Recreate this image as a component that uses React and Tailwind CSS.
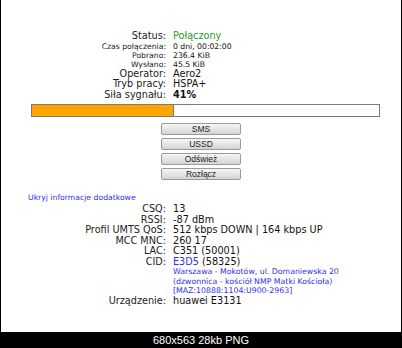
import React from 'react';

const Row = ({ label, children, small }) => (
  <div className={small ? 'flex text-[7.7px] leading-[9px]' : 'flex text-[9.7px] leading-[10.5px]'}>
    <div className="w-[165px] shrink-0 text-right text-[#222]">{label}</div>
    <div className="pl-[7px] text-[#111] whitespace-nowrap">{children}</div>
  </div>
);

const Btn = ({ children }) => (
  <button className="mx-auto block w-[80px] h-[12px] rounded-[2px] border border-[#9a9a9a] bg-gradient-to-b from-[#f6f6f6] to-[#d4d4d4] text-[8.5px] leading-[10px] text-[#222] font-['Liberation_Sans',Arial,sans-serif]">
    {children}
  </button>
);

const App = () => {
  const signal = 41;

  return (
    <div className="w-[402px] h-[348px] bg-black flex flex-col font-['DejaVu_Sans',Verdana,sans-serif]">
      <div className="ml-[1px] mr-[1px] h-[332px] bg-white pt-[31px]">
        <Row label="Status:"><span className="text-[#22a022]">Połączony</span></Row>
        <Row small label="Czas połączenia:">0 dni, 00:02:00</Row>
        <Row small label="Pobrano:">236.4 KiB</Row>
        <Row small label="Wysłano:">45.5 KiB</Row>
        <Row label="Operator:">Aero2</Row>
        <Row label="Tryb pracy:">HSPA+</Row>
        <Row label="Siła sygnału:"><span className="font-bold">{signal}%</span></Row>

        <div className="ml-[30px] mt-[4px] w-[349px] h-[13px] border border-[#7a7a7a] bg-white">
          <div className="h-full bg-[#ffa500] border-r border-[#7a7a7a]" style={{ width: `${signal}%` }} />
        </div>

        <div className="mt-[6px] flex flex-col gap-[3px]">
          <Btn>SMS</Btn>
          <Btn>USSD</Btn>
          <Btn>Odśwież</Btn>
          <Btn>Rozłącz</Btn>
        </div>

        <div className="ml-[27px] mt-[13px] text-[7.7px] leading-[10px] text-[#3030f0]">Ukryj informacje dodatkowe</div>

        <div className="mt-[1px]">
          <Row label="CSQ:">13</Row>
          <Row label="RSSI:">-87 dBm</Row>
          <Row label="Profil UMTS QoS:">512 kbps DOWN | 164 kbps UP</Row>
          <Row label="MCC MNC:">260 17</Row>
          <Row label="LAC:">C351 (50001)</Row>
          <Row label="CID:"><span className="text-[#3030f0]">E3D5</span> (58325)</Row>
          <div className="ml-[172px] text-[7.8px] leading-[9.5px] text-[#3030f0]">
            <div>Warszawa - Mokotów, ul. Domaniewska 20</div>
            <div>(dzwonnica - kościół NMP Matki Kościoła)</div>
            <div>[MAZ:10888:1104:U900-2963]</div>
          </div>
          <Row label="Urządzenie:">huawei E3131</Row>
        </div>
      </div>
      <div className="flex-1 flex items-center justify-center text-white text-[11px] font-['Liberation_Sans',Arial,sans-serif]">
        680x563 28kb PNG
      </div>
    </div>
  );
};

export default App;
